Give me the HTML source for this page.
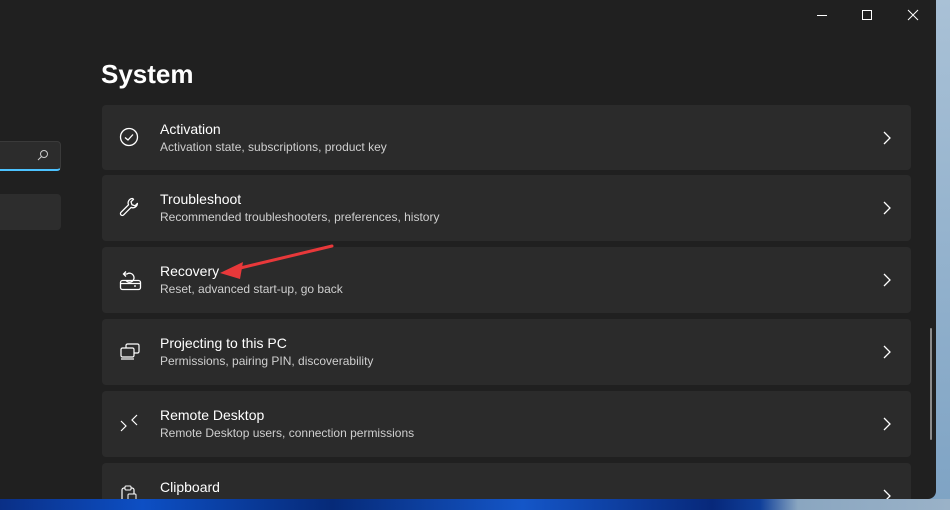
<!DOCTYPE html>
<html><head><meta charset="utf-8"><style>
*{margin:0;padding:0;box-sizing:border-box}
body{width:950px;height:510px;overflow:hidden;position:relative;background:linear-gradient(180deg,#a9c1d6,#7ea3c4);font-family:"Segoe UI","Liberation Sans",sans-serif;}
.wall{position:absolute;left:0;top:499px;width:950px;height:11px;background:linear-gradient(90deg,#0a2f86,#0d4fc4 15%,#062a78 35%,#1456c8 55%,#07287a 75%,#0f3f9a 80%,#8aa6c0 84%,#9ab2c8)}
.win{position:absolute;left:0;top:0;width:936px;height:499px;background:#202020;border-radius:0 0 8px 0;overflow:hidden}
.search{position:absolute;left:-10px;top:141px;width:71px;height:30px;background:#2c2c2c;border:1px solid #3a3a3a;border-radius:4px;border-bottom:2px solid #4cc2ff}
.nav{position:absolute;left:-10px;top:194px;width:71px;height:36px;background:#2d2d2d;border-radius:4px}
h1{position:absolute;left:101px;top:59px;font-size:26px;font-weight:600;color:#fff}
.card{position:absolute;left:102px;width:809px;height:66px;background:#2b2b2b;border-radius:4px}
.card .t{position:absolute;left:58px;top:16px;font-size:14px;color:#fff}
.card .s{position:absolute;left:58px;top:35px;font-size:12px;color:#cfcfcf}
.card svg.i{position:absolute;left:17px;top:22px}
.card svg.c{position:absolute;left:780px;top:26px}
.ctl{position:absolute;top:9px}
.sb{position:absolute;left:930px;top:328px;width:2px;height:112px;background:#8a8a8a;border-radius:1px}
</style></head><body>
<div class="wall"></div>
<div class="win">
<svg class="ctl" style="left:816px" width="12" height="12"><path d="M1 6.5H11" stroke="#fff" stroke-width="1"/></svg>
<svg class="ctl" style="left:861px" width="12" height="12"><rect x="1.5" y="1.5" width="9" height="9" fill="none" stroke="#fff"/></svg>
<svg class="ctl" style="left:907px" width="12" height="12"><path d="M1 1L11 11M11 1L1 11" stroke="#fff"/></svg>
<div class="search"><svg style="position:absolute;left:46px;top:7px" width="12" height="12"><circle cx="7" cy="5" r="3.5" fill="none" stroke="#ccc"/><path d="M4.5 7.5L1 11" stroke="#ccc"/></svg></div>
<div class="nav"></div>
<h1>System</h1>
<div class="card" style="top:105px;height:65px"><svg class="i" width="20" height="20"><circle cx="10" cy="10" r="8.5" fill="none" stroke="#fff" stroke-width="1.3"/><path d="M6 10.5L9 13L14 7.5" fill="none" stroke="#fff" stroke-width="1.3"/></svg><div class="t">Activation</div><div class="s">Activation state, subscriptions, product key</div><svg class="c" width="10" height="14"><path d="M2 1L8 7L2 13" fill="none" stroke="#fff" stroke-width="1.3"/></svg></div>
<div class="card" style="top:175px"><svg class="i" width="20" height="20"><path d="M13.5 1.5a4.5 4.5 0 0 0-4 6.3L2 15.3a1.8 1.8 0 0 0 2.6 2.6l7.5-7.5a4.5 4.5 0 0 0 6.3-4L16 8.8l-3-1-1-3 2.5-2.5z" fill="none" stroke="#fff" stroke-width="1.3" stroke-linejoin="round"/></svg><div class="t">Troubleshoot</div><div class="s">Recommended troubleshooters, preferences, history</div><svg class="c" width="10" height="14"><path d="M2 1L8 7L2 13" fill="none" stroke="#fff" stroke-width="1.3"/></svg></div>
<div class="card" style="top:247px"><svg style="position:absolute;left:16px;top:21px" width="26" height="26"><rect x="2.5" y="12.5" width="20" height="9" rx="2" fill="none" stroke="#fff" stroke-width="1.3"/><path d="M2.5 15.5H22.5" stroke="#fff" stroke-width="1.2"/><path d="M8 12.5a4.5 4.5 0 1 0 1-6.5H6" fill="none" stroke="#fff" stroke-width="1.3"/><path d="M8 3.5L5.5 6L8 8.5" fill="none" stroke="#fff" stroke-width="1.3"/><path d="M17 17v2" stroke="#fff" stroke-width="1.3"/></svg><div class="t">Recovery</div><div class="s">Reset, advanced start-up, go back</div><svg class="c" width="10" height="14"><path d="M2 1L8 7L2 13" fill="none" stroke="#fff" stroke-width="1.3"/></svg></div>
<div class="card" style="top:319px"><svg class="i" width="22" height="20"><rect x="7" y="3" width="13" height="9" rx="1.5" fill="none" stroke="#fff" stroke-width="1.2"/><rect x="2" y="7" width="13" height="9" rx="1.5" fill="#2b2b2b" stroke="#fff" stroke-width="1.2"/><path d="M2 18H15" stroke="#fff" stroke-width="1.2"/></svg><div class="t">Projecting to this PC</div><div class="s">Permissions, pairing PIN, discoverability</div><svg class="c" width="10" height="14"><path d="M2 1L8 7L2 13" fill="none" stroke="#fff" stroke-width="1.3"/></svg></div>
<div class="card" style="top:391px"><svg class="i" width="22" height="20"><path d="M2 8L7 13L2 18M18 2L13 7L18 12" fill="none" stroke="#fff" stroke-width="1.2"/></svg><div class="t">Remote Desktop</div><div class="s">Remote Desktop users, connection permissions</div><svg class="c" width="10" height="14"><path d="M2 1L8 7L2 13" fill="none" stroke="#fff" stroke-width="1.3"/></svg></div>
<div class="card" style="top:463px"><svg class="i" width="22" height="20"><rect x="3" y="3" width="12" height="16" rx="2" fill="none" stroke="#fff" stroke-width="1.2"/><rect x="6" y="1" width="6" height="4" rx="1" fill="#2b2b2b" stroke="#fff"/><rect x="9" y="9" width="8" height="10" rx="1" fill="#2b2b2b" stroke="#fff"/></svg><div class="t">Clipboard</div><svg class="c" width="10" height="14"><path d="M2 1L8 7L2 13" fill="none" stroke="#fff" stroke-width="1.3"/></svg></div>
<div class="sb"></div>
<svg style="position:absolute;left:0;top:0" width="936" height="499"><path d="M332 246L232 270" stroke="#e8383a" stroke-width="3" stroke-linecap="round"/><path d="M220 273L243 262L240 279Z" fill="#e8383a"/></svg>
</div>
</body></html>
